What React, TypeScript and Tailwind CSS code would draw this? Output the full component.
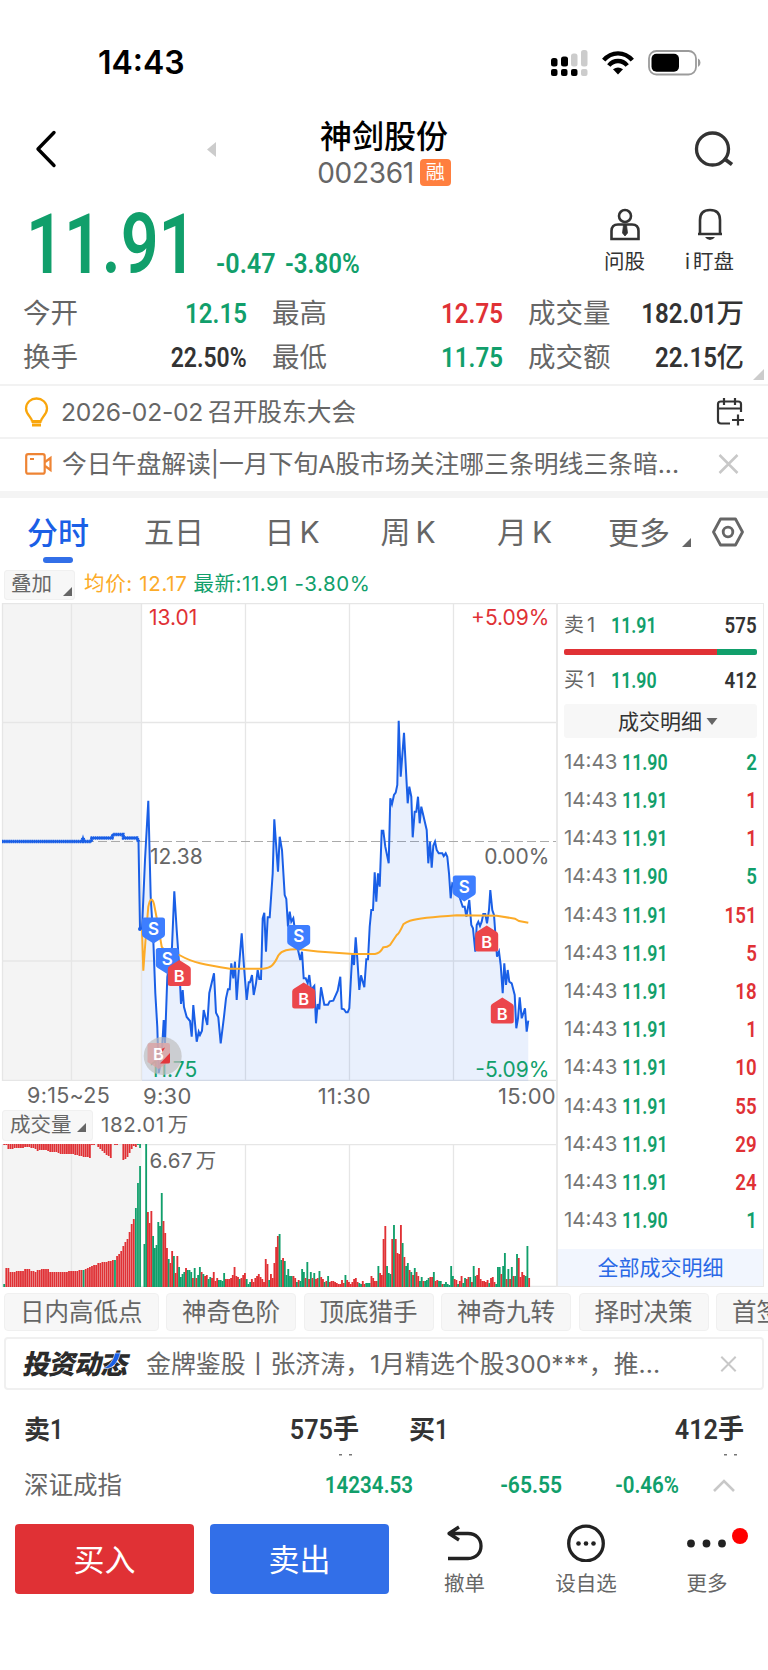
import React from "react";
import clsx from "clsx";

const GREEN = "#119f6b";
const RED = "#e03135";
const BLUE = "#1a5fe6";

// ── Data ─────────────────────────────────────────────────────────────────────

const PRE_MARKET = "2,238.5 82,238.5 83,235 84,238.5 91,238.5 92,235 112,235 113,231.5 123,231.5 123.5,235 137,235 138.5,238.5 140,326";

const PRICE_LINE =
  "142,326 145,257 148.3,197.7 150.7,293.7 153.3,337 155.3,390 157.3,424 158.7,470 161.5,455 163.7,417 165,440 167.3,374 172,344 174.3,288.3 176.7,327 179.3,364 181,401 182.7,387 184,404 186.7,414 190,418 191.7,433.7 193.3,402 196.7,438.7 198.7,428.7 200,432 202,427.7 203.7,407 207.3,422 209.3,390 214,370.3 216,409.7 218.3,414.3 220.7,440.3 224,413.7 226,395.3 228,386.3 229.7,386.3 231.3,360.3 233.3,375.3 235,358.7 236.7,397 239,363.7 241.7,330.3 244,363.7 246.7,397 248.7,379.3 250,379.3 252,372 253.7,392 256,380.3 257.7,367 259.3,376 261,376 262.7,315.3 264.3,309.7 266,348.7 267.7,314.3 269.7,314.3 272.7,270.3 274.3,216.3 278,268.7 279.7,233.7 282,247 284.7,292 286.3,296 288,323.7 289.7,308.7 291.3,318.7 293.3,315.3 297.3,343.7 300.3,357 302,348.7 303.7,375.3 305.7,375.3 307.7,380.3 309.3,372 311,387 314.3,383 316,420.3 317.7,401 319.3,406.3 321,384.3 324.3,401.7 328,401.7 329.7,398.3 333.3,397.7 337.7,387.7 340.3,373.7 341.7,405.7 344,406.3 346,409.3 347.7,409.3 349.3,405.3 352.3,350.3 354,362 355.7,334.3 357.3,355.3 359.3,387 361,372.3 364.3,384.3 366.3,356.3 368,356.3 369.7,323.7 371.3,307 373,307 374.7,269.3 376.3,298.7 378,270.3 379.7,283.7 381.7,227.7 383.3,227.7 385.3,243.7 388.7,260.3 390.3,195.3 392,201 394,192 395.7,189.7 397.3,182 398.7,117.7 400.7,173.7 404,129.7 407.7,200.3 409.3,183.7 411.3,193.7 412.7,234.3 414.7,208.7 416.3,208.7 418,193.7 419.7,220.3 421.3,203.7 426.7,227 428.3,260.3 430,238.7 431.7,264.7 433.3,242.7 435,238.7 436.7,247 438.7,250.3 442.3,250.3 443.7,253 445.7,250.3 447.3,253.7 449,270.3 450.7,295.3 452.3,280.3 456,283 462.7,303.7 464.7,303.7 466.3,313.7 469.3,297 471.3,322 473,325.3 475.3,348.7 476.7,322 478.3,318.7 480,323 481.7,318.7 483.3,311 485.3,311 487,320.3 489,307 490.3,287 492.3,307 494,312 497,353.7 499,348.7 500.7,362 502.7,390.3 504.3,360.3 506,382 507.7,367 509.3,378.7 511.7,380.3 514.7,392 516.3,425.3 518,415.3 519.7,394.3 521.7,415.3 525,405.3 526.7,428.7 528.3,417.7";

const AVERAGE_LINE =
  "M142 327L143.3 367.7L145.3 340L148.3 303.7Q151 291 154 301L156.7 315L161.7 343.7Q166 352 179.3 352Q190 358 200 360.3T230 365.7H263.3Q269 365 271.7 362.7Q275 360 278.3 352.5Q281 348.5 286 347.2T300 346.3Q310 348 325 349T353.3 351H375Q380 350.5 383.3 344.3Q387 344.5 390 342L396.7 332Q399 331 403.3 321.3Q406 319 410 317.7Q420 314.8 456.7 312.3L496.7 312.7L515 315.7L519 318L528.3 319.7";

// Heights in px, negative values are falling (green) bars
const AUCTION_VOLUME = [
  -3, 19, 19, 15, 15, 15, 16, 16, 16, 16, 18, 18, 18, 16, 16, 15, 17, 17, 18, 18, 18, 18, 15, 15, 15, 15, 15, 15, 15, 15,
  15, 16, 16, 16, 16, 16, 17, 17, -17, 18, 19, 20, 21, 22, 22, 24, 24, 25, 25, 25, 26, 26, 27, -27, 31, 33, 36, 41, 45,
  48, 55, 63, 68, -79, -104, -121,
];

const AUCTION_UNMATCHED = [
  1, 1, 5, 5, 5, 4, 4, 4, 4, 4, 3, 3, 3, 4, 4, 5, 7, 6, 6, 6, 6, 7, 8, 8, 8, 8, 9, 10, 10, 10, 10, 10, 10, 10, 11, 11, 12,
  12, 13, 13, 13, 14, 1, 1, 0, 3, 5, 7, 9, 11, 12, 14, 0, 1, 1, 0, 0, 16, 15, 13, 9, 5, 2, 3, -1, -4,
];

const MINUTE_VOLUME = [
  -43, -143, 75, 64, 76, -51, -39, -42, -65, -61, -94, 66, 54, 39, -28, 24, 36, -31, 14, 31, -20, -10, -13, -15, 19, -17,
  -17, -15, 9, -19, 9, -12, -20, 15, -13, 11, 12, -8, -10, 9, 15, 6, 9, -7, -7, -6, -14, 8, 8, 8, 9, 12, 20, 11, 10, -8, 9,
  12, 14, -8, -3, -5, 8, 5, 9, 11, 13, 10, 8, 5, 28, 23, -7, 13, 9, 24, 40, 51, -53, -27, 29, -26, -12, -18, -11, -11, 11,
  9, -5, 7, -6, -18, -15, 9, -25, 8, -15, 9, -14, 8, 9, -16, 10, 8, -5, 6, -11, 5, 6, 6, 5, 4, 3, 3, 7, 4, -12, 7, 5, 3, 5,
  8, 9, 5, -4, -3, 6, 3, -4, -4, -4, 11, 9, 6, 6, -21, 14, 12, 48, 61, -21, -14, -13, 48, -62, 48, 34, 33, 62, -44, 30, -21,
  -24, 17, -15, 12, -19, 15, 11, -6, -10, 6, -6, -7, -9, 10, 10, -15, 6, 7, -6, -6, 3, -3, -5, -3, -2, -21, -11, 8, 7, -3,
  6, 11, -4, -9, 8, 10, -10, 5, -21, -11, 12, 19, 8, 6, 6, 5, 7, -4, 9, 10, 5, -3, -20, -20, 13, -21, -34, 8, -18, 8, -20,
  11, -11, -33, 29, 10, 15, 12, -11, -41, 9,
];

const TRADES: [string, number, boolean][] = [
  ["11.90", 2, false],
  ["11.91", 1, true],
  ["11.91", 1, true],
  ["11.90", 5, false],
  ["11.91", 151, true],
  ["11.91", 5, true],
  ["11.91", 18, true],
  ["11.91", 1, true],
  ["11.91", 10, true],
  ["11.91", 55, true],
  ["11.91", 29, true],
  ["11.91", 24, true],
  ["11.90", 1, false],
];

// ── Small pieces ─────────────────────────────────────────────────────────────

// Condensed figures used for every price and quantity
const Din = ({
  children,
  className,
  scale = "scale-x-[0.86]",
}: {
  children: React.ReactNode;
  className?: string;
  scale?: string;
}) => (
  <span className={clsx("inline-block font-['Roboto'] font-semibold whitespace-nowrap", scale, className)}>
    {children}
  </span>
);

const Corner = ({ className }: { className?: string }) => (
  <svg viewBox="0 0 10 10" className={className} fill="currentColor">
    <path d="M10 0V10H0Z" />
  </svg>
);

const Close = ({ className }: { className?: string }) => (
  <svg viewBox="0 0 20 20" className={className} fill="none" stroke="#c8c8c8" strokeWidth="2.500">
    <path d="M1 1L19 19M19 1L1 19" />
  </svg>
);

const SellMark = ({ x, y }: { x: number; y: number }) => (
  <g transform={`translate(${x} ${y})`}>
    <path d="M-9 0H9Q11.500 0 11.500 2.500V17Q11.500 19 9.500 20L0 26L-9.500 20Q-11.500 19 -11.500 17V2.500Q-11.500 0 -9 0Z" fill="#3d7eff" />
    <text y="17" textAnchor="middle" fontSize="17" fontWeight="600" fill="#fff">S</text>
  </g>
);

const BuyMark = ({ x, y }: { x: number; y: number }) => (
  <g transform={`translate(${x} ${y})`}>
    <path d="M0 0L9.500 6Q11.500 7 11.500 9V23.500Q11.500 26 9 26H-9Q-11.500 26 -11.500 23.500V9Q-11.500 7 -9.500 6Z" fill="#eb464b" />
    <text y="22" textAnchor="middle" fontSize="16.500" fontWeight="600" fill="#fff">B</text>
  </g>
);

// ── Top area ─────────────────────────────────────────────────────────────────

const StatusBar = () => (
  <div className="flex h-[100px] shrink-0 items-center pt-[25px] pr-[67px] pl-[98px]">
    <span className="text-[32px] leading-none font-semibold text-black">14:43</span>
    <div className="ml-auto flex items-center">
      <svg width="38" height="26" viewBox="0 0 38 26" className="mr-[13px]">
        <g fill="#000">
          <rect x="0" y="8" width="6.500" height="8.500" rx="2.500" />
          <rect x="10" y="6.500" width="7" height="10" rx="2.500" />
          <rect x="0" y="19" width="6.500" height="7" rx="2" />
          <rect x="10" y="19" width="6.500" height="7" rx="2" />
          <rect x="20" y="19" width="6.500" height="7" rx="2" />
        </g>
        <g fill="#ccc">
          <rect x="20" y="3.500" width="6.500" height="13" rx="2.500" />
          <rect x="30" y="0" width="6.500" height="16.500" rx="2.500" />
          <rect x="30" y="19" width="6.500" height="7" rx="2" />
        </g>
      </svg>
      <svg width="32" height="24" viewBox="0 0 32 24" className="mr-[14px]">
        <g fill="none" stroke="#000" strokeWidth="4.300">
          <path d="M1.700 9.200Q7.500 2.300 16 2.300T30.300 9.200" />
          <path d="M6.800 14.500Q10.500 10 16 10T25.200 14.500" />
        </g>
        <path d="M16 23.500L11 18.300Q16 14.500 21 18.300Z" fill="#000" />
      </svg>
      <svg width="53" height="26" viewBox="0 0 53 26">
        <rect x="1" y="1" width="47" height="23.500" rx="7.500" fill="none" stroke="#9b9b9b" strokeWidth="1.800" />
        <rect x="3.500" y="3.800" width="27.500" height="18" rx="5" fill="#000" />
        <path d="M50 8.500Q52.500 9.500 52.500 12.700T50 17Z" fill="#9b9b9b" />
      </svg>
    </div>
  </div>
);

const Header = () => (
  <div className="grid h-[98px] shrink-0 grid-cols-[284px_200px_284px] items-center">
    <div className="flex items-center pl-[35px]">
      <svg width="22" height="38" viewBox="0 0 22 38" fill="none" stroke="#000" strokeWidth="3.400" strokeLinejoin="round" strokeLinecap="round">
        <path d="M19 2.500L3 19L19 35.500" />
      </svg>
      <svg width="9" height="15" viewBox="0 0 9 15" className="ml-[150px]" fill="#ccc">
        <path d="M9 0V15L0 7.500Z" />
      </svg>
    </div>
    <div className="flex flex-col items-center pt-[10px]">
      <h1 className="text-[32px] leading-[37px] font-medium text-black">神剑股份</h1>
      <div className="flex h-[36px] items-center gap-[6px]">
        <span className="text-[28px] leading-none tracking-[-0.3px] text-[#666]">002361</span>
        <span className="flex h-[27px] w-[31px] items-center justify-center rounded-[4px] bg-[#ff7f3f] text-[19px] leading-none text-white">
          融
        </span>
      </div>
    </div>
    <svg width="40" height="36" viewBox="0 0 40 36" className="mr-[34px] justify-self-end" fill="none" stroke="#333" strokeWidth="3.300">
      <circle cx="18.500" cy="18" r="16" />
      <path d="M30 27.500L38 33.500" strokeWidth="3.800" />
    </svg>
  </div>
);

const Quote = () => (
  <div className="flex h-[93px] shrink-0 pl-[26px] text-[#119f6b]">
    <div className="h-full w-[190px] pt-[5px]">
      <Din scale="scale-x-[0.79]" className="origin-left text-[84px] leading-[84px]">11.91</Din>
    </div>
    <div className="flex gap-[1px] pt-[52px]">
      <Din scale="scale-x-[0.9]" className="w-[68px] origin-left text-[28px] leading-[28px]">-0.47</Din>
      <Din className="origin-left text-[28px] leading-[28px]">-3.80%</Din>
    </div>
    <div className="mt-[10px] mr-[34px] ml-auto flex gap-[40px] text-[20.500px] leading-none text-[#333]">
      <div className="flex flex-col items-center gap-[11px]">
        <svg width="30" height="33" viewBox="0 0 30 33" fill="none" stroke="#333" strokeWidth="2.600">
          <circle cx="15" cy="8" r="6" />
          <path d="M1.500 31V23Q1.500 16.500 8 16.500H22Q28.500 16.500 28.500 23V31Z" />
          <path d="M13.500 17H16.500L17.500 25L15 28L12.500 25Z" fill="#333" strokeWidth="0.800" />
        </svg>
        <span>问股</span>
      </div>
      <div className="flex flex-col items-center gap-[11px]">
        <svg width="30" height="33" viewBox="0 0 30 33" fill="none" stroke="#333" strokeWidth="2.600">
          <path d="M5 26V12Q5 2 15 2T25 12V26M3 26H27" />
          <path d="M10 29H20Q18 32 15 32T10 29Z" fill="#333" stroke="none" />
        </svg>
        <span><span className="mr-[3px]">i</span>盯盘</span>
      </div>
    </div>
  </div>
);

const Stat = ({ label, value, unit, color = "text-[#333]" }: { label: string; value: string; unit?: string; color?: string }) => (
  <div className="flex h-[44px] items-center justify-between leading-none">
    <span className="text-[27.500px] text-[#666]">{label}</span>
    <span className={clsx("flex items-center text-[28px]", color)}>
      <Din className="origin-right" scale={value.endsWith("%") ? "scale-x-[0.82]" : "scale-x-[0.86]"}>
        {value}
      </Din>
      {unit && <span className="text-[27.500px] font-medium">{unit}</span>}
    </span>
  </div>
);

const Stats = () => (
  <div className="flex h-[93px] shrink-0 items-start">
    <div className="grid w-full grid-cols-[224px_231px_216px] gap-x-[25px] pt-[1px] pl-[23px]">
      <Stat label="今开" value="12.15" color="text-[#119f6b]" />
      <Stat label="最高" value="12.75" color="text-[#e03135]" />
      <Stat label="成交量" value="182.01" unit="万" />
      <Stat label="换手" value="22.50%" />
      <Stat label="最低" value="11.75" color="text-[#119f6b]" />
      <Stat label="成交额" value="22.15" unit="亿" />
    </div>
    <Corner className="mt-[78px] mr-[4px] h-[11px] w-[11px] shrink-0 text-[#ccc]" />
  </div>
);

const Notices = () => (
  <div className="shrink-0 text-[#666]">
    <div className="flex h-[53px] items-center border-t-2 border-[#f2f2f2] pr-[24px] pl-[24px]">
      <svg width="26" height="30" viewBox="0 0 26 30" fill="none" stroke="#f9a60c" strokeWidth="2.300">
        <path d="M8 24.500C8 20 2 18 2 11.500C2 5.500 7 1.500 12.500 1.500S23 5.500 23 11.500C23 18 17 20 17 24.500" />
        <path d="M7.500 24.500H17.500M8 28H17" strokeWidth="2.800" />
      </svg>
      <span className="ml-[11px] pt-px text-[24.700px] leading-none">
        <span className="mr-[5px] tracking-[-0.300px]">2026-02-02</span>召开股东大会
      </span>
      <svg width="28" height="28" viewBox="0 0 28 28" className="ml-auto" fill="none" stroke="#333" strokeWidth="2.200">
        <path d="M14 25.500H5Q2 25.500 2 22.500V6Q2 3.500 5 3.500H22Q25 3.500 25 6V14M2 10.500H25M8 0V7M19 0V7" />
        <path d="M16 22H28M22 16.500V27.500" />
      </svg>
    </div>
    <div className="flex h-[54px] items-center border-t-2 border-[#f2f2f2] pr-[29px] pb-[2px] pl-[25px]">
      <svg width="28" height="22" viewBox="0 0 28 22" fill="none" stroke="#ee8434" strokeWidth="2.200">
        <rect x="1.200" y="1.200" width="18.500" height="19.500" rx="2" />
        <path d="M5 6H9M20 9L25.500 5V17L20 13" />
      </svg>
      <span className="ml-[9px] w-[620px] text-[24.800px] leading-none whitespace-nowrap">
        今日午盘解读|一月下旬A股市场关注哪三条明线三条暗...
      </span>
      <Close className="ml-auto h-[20px] w-[21px]" />
    </div>
    <div className="h-[7px] bg-[#f4f4f4]" />
  </div>
);

const Tabs = () => (
  <div className="flex h-[68px] shrink-0 items-center text-[30px] leading-none text-[#666]">
    <div className="relative flex w-[116px] justify-center text-[31px] font-medium text-[#1a5fe6]">
      分时
      <span className="absolute -bottom-[15px] left-[43px] h-[6px] w-[30px] rounded-full bg-[#326fe8]" />
    </div>
    <div className="w-[116px] text-center">五日</div>
    <div className="w-[120px] text-center">日<span className="ml-[5px]">K</span></div>
    <div className="w-[112px] text-center">周<span className="ml-[5px]">K</span></div>
    <div className="w-[121px] text-center">月<span className="ml-[5px]">K</span></div>
    <div className="ml-[23px] w-[62px] text-[31px]">更多</div>
    <Corner className="mt-[21px] ml-[12px] h-[9px] w-[9px]" />
    <svg width="32" height="30" viewBox="0 0 32 30" className="ml-[21px]" fill="none" stroke="#666" strokeWidth="2.800" strokeLinejoin="round">
      <path d="M8.500 2H23.500L30.500 15L23.500 28H8.500L1.500 15Z" />
      <circle cx="16" cy="15" r="4.800" />
    </svg>
  </div>
);

// ── Charts ───────────────────────────────────────────────────────────────────

const Legend = () => (
  <div className="flex h-[37px] shrink-0 items-center pl-[4px] text-[20.500px] leading-none">
    <div className="flex h-[30px] w-[71px] items-center rounded-[3px] border border-[#f0f0f0] bg-[#f7f7f7] pl-[6px] text-[#666]">
      叠加
      <Corner className="mt-[13px] ml-[11px] h-[9px] w-[9px]" />
    </div>
    <span className="ml-[9px] tracking-[0.650px] text-[#fcab28]">均价: 12.17</span>
    <span className="ml-[6px] tracking-[0.550px] text-[#119f6b]">最新:11.91 -3.80%</span>
  </div>
);

const PriceChart = () => (
  <svg width="556" height="478" viewBox="0 0 556 478" className="block font-['Inter','Noto_Sans_CJK_SC',sans-serif]">
    <rect x="2" y="0" width="139.500" height="478" fill="#f4f4f4" />
    <path d="M2 0.500H557M2 119.500H557M2 358H557M2 477.500H557M2.500 0V478M71.500 0V478M141.500 0V478M245.500 0V478M349.500 0V478M453.500 0V478" stroke="#e6e6e6" strokeWidth="1.300" fill="none" />
    <path d="M85 238.500H557" stroke="#aaa" strokeWidth="1.200" strokeDasharray="9 4" />
    <polygon points={`142,478 ${PRICE_LINE} 528.3,478`} fill="#2b6cf0" fillOpacity="0.1" />
    <g fontSize="21">
      <text x="149" y="21.500" fill={RED}>13.01</text>
      <text x="549.500" y="21.500" textAnchor="end" fill={RED}>+5.09%</text>
      <text x="150" y="261" fill="#666">12.38</text>
      <text x="549.500" y="261" textAnchor="end" fill="#666">0.00%</text>
      <text x="150" y="474" fill={GREEN}>11.75</text>
      <text x="549.500" y="474" textAnchor="end" fill={GREEN}>-5.09%</text>
    </g>
    <polyline points={PRE_MARKET} fill="none" stroke={BLUE} strokeWidth="2" />
    <polyline points={PRE_MARKET.replace(" 140,326", "")} fill="none" stroke={BLUE} strokeWidth="3.600" strokeDasharray="1.6 0.5" />
    <circle cx="140" cy="326" r="2" fill={BLUE} />
    <polyline points={PRICE_LINE} fill="none" stroke={BLUE} strokeWidth="2" />
    <path d={AVERAGE_LINE} fill="none" stroke="#fcab28" strokeWidth="2" />
    <SellMark x={153.5} y={314.5} />
    <SellMark x={167.3} y={345} />
    <BuyMark x={179.3} y={357} />
    <SellMark x={298.7} y={322} />
    <BuyMark x={303.7} y={379.5} />
    <SellMark x={464.3} y={272.5} />
    <BuyMark x={486.7} y={322.5} />
    <BuyMark x={502.3} y={394.5} />
    {/* Touch indicator over the last buy mark */}
    <circle cx="162.700" cy="453" r="19" fill="#bdbdbd" fillOpacity="0.7" />
    <path d="M149.500 440H168Q170 440 170 442V458L158.700 466L147.500 459V442Q147.500 440 149.500 440Z" fill="#d9a3a4" fillOpacity="0.8" />
    <text x="158.500" y="457" textAnchor="middle" fontSize="16.500" fontWeight="600" fill="#fff">B</text>
    <path d="M170 450V459Q170 460.500 168 460.500H160Z" fill="#e2373c" />
    <path d="M161.500 446L165 444.500L162.500 449Z" fill="#e2373c" />
  </svg>
);

const VolumeChart = () => (
  <svg width="556" height="143" viewBox="0 0 556 143" className="block font-['Inter','Noto_Sans_CJK_SC',sans-serif]">
    <rect x="2" y="0" width="139.500" height="143" fill="#f4f4f4" />
    <path d="M2 0.500H557M2 142.500H557M2.500 0V143M71.500 0V143M245.500 0V143M349.500 0V143M453.500 0V143" stroke="#e6e6e6" strokeWidth="1.300" fill="none" />
    {AUCTION_VOLUME.map((v, i) => (
      <rect key={i} x={3.3 + i * 2.09} y={143 - Math.abs(v)} width="1.800" height={Math.abs(v)} fill={v < 0 ? GREEN : RED} />
    ))}
    {AUCTION_UNMATCHED.map((v, i) => (
      <rect key={i} x={3.3 + i * 2.09} y="0" width="1.800" height={Math.abs(v)} fill={v < 0 ? GREEN : RED} />
    ))}
    {MINUTE_VOLUME.map((v, i) => (
      <rect key={i} x={143.5 + i * 1.733} y={143 - Math.abs(v)} width="1.850" height={Math.abs(v)} fill={v < 0 ? GREEN : RED} />
    ))}
    <text x="149.500" y="23.500" fontSize="20.500" letterSpacing="0.4" fill="#666">6.67<tspan dx="3">万</tspan></text>
  </svg>
);

const ChartColumn = () => (
  <div className="w-[556px] shrink-0 text-[#666]">
    <PriceChart />
    <div className="flex h-[30px] items-center text-[22px] leading-none tracking-[0.300px]">
      <span className="w-[116px] pl-[27px] text-[21.500px]">9:15~25</span>
      <span className="ml-[27px]">9:30</span>
      <span className="ml-[126px]">11:30</span>
      <span className="ml-auto">15:00</span>
    </div>
    <div className="mb-[5px] flex h-[28px] items-center pl-[2px] text-[20.500px] leading-none">
      <div className="flex h-[31px] w-[91px] items-center rounded-[3px] border border-[#f0f0f0] bg-[#f7f7f7] pl-[7px]">
        成交量
        <Corner className="mt-[5px] ml-[5px] h-[9px] w-[9px]" />
      </div>
      <span className="ml-[8px] tracking-[0.600px]">182.01<span className="ml-[3px]">万</span></span>
    </div>
    <VolumeChart />
  </div>
);

const OrderRow = ({ side, price, qty }: { side: string; price: string; qty: string }) => (
  <div className="flex h-[42px] items-center text-[22.500px] leading-none">
    <span className="w-[47px] text-[20px] text-[#666]">{side}<span className="ml-[3px]">1</span></span>
    <Din scale="scale-x-[0.79]" className="origin-left text-[#119f6b]">{price}</Din>
    <Din scale="scale-x-[0.83]" className="ml-auto origin-right text-[#333]">{qty}</Din>
  </div>
);

const TradePanel = () => (
  <div className="flex w-[208px] flex-col border border-l-2 border-[#e9e9e9]">
    <div className="flex flex-col pr-[6px] pl-[6px]">
      <OrderRow side="卖" price="11.91" qty="575" />
      <div className="mt-[3px] flex h-[6px] overflow-hidden rounded-[2px]">
        <div className="w-[153px] bg-[#e03135]" />
        <div className="flex-1 bg-[#119f6b]" />
      </div>
      <div className="mt-[4px]">
        <OrderRow side="买" price="11.90" qty="412" />
      </div>
      <div className="mt-[3px] flex h-[34px] items-center justify-center rounded-[3px] bg-[#f7f7f7] text-[21px] leading-none text-[#333]">
        <span className="ml-[15px]">成交明细</span>
        <svg width="12" height="7" viewBox="0 0 12 7" className="ml-[4px]" fill="#666">
          <path d="M0.500 0H11.500L6 7Z" />
        </svg>
      </div>
      <div className="mt-[5px]">
        {TRADES.map(([price, qty, up], i) => (
          <div key={i} className="flex h-[38.200px] items-center text-[22.500px] leading-none">
            <span className="w-[58px] text-[20.500px] text-[#777]">14:43</span>
            <Din scale="scale-x-[0.79]" className="origin-left text-[#119f6b]">{price}</Din>
            <Din scale="scale-x-[0.83]" className={clsx("ml-auto origin-right", up ? "text-[#e03135]" : "text-[#119f6b]")}>
              {qty}
            </Din>
          </div>
        ))}
      </div>
    </div>
    <div className="mt-auto flex h-[37px] items-center justify-center bg-[#f2f6fe] text-[21px] leading-none text-[#2a69e6]">
      全部成交明细
    </div>
  </div>
);

// ── Bottom area ──────────────────────────────────────────────────────────────

const Chips = () => (
  <div className="mt-[6px] flex h-[38px] shrink-0 gap-[7.500px] overflow-hidden pl-[4px] text-[24.500px] leading-none text-[#666]">
    {["日内高低点", "神奇色阶", "顶底猎手", "神奇九转", "择时决策", "首签"].map((name) => (
      <div key={name} className="flex h-full shrink-0 items-center rounded-[4px] border border-[#f0f0f0] bg-[#f7f7f7] px-[15px]">
        {name}
      </div>
    ))}
  </div>
);

const News = () => (
  <div className="mx-[4px] mt-[6px] flex h-[53px] shrink-0 items-center rounded-[4px] border-2 border-[#f0f0f0] pt-px pr-[25px] pl-[18px]">
    <div className="relative h-[27px] w-[106px]">
      <span className="block -skew-x-12 text-[27px] leading-none font-black tracking-[-1px] text-[#2b2b2b]">投资动态</span>
      <svg width="20" height="17" viewBox="0 0 20 17" className="absolute top-[1px] left-[78px]">
        <path d="M0 16.500Q10 14 13 1H18.500Q15 14.500 6 16.500Z" fill="#1a5fe6" stroke="#fff" strokeWidth="0.600" />
      </svg>
    </div>
    <span className="ml-[16px] text-[24.900px] leading-none whitespace-nowrap text-[#666]">
      金牌鉴股丨张济涛，1月精选个股300***，推...
    </span>
    <Close className="ml-auto h-[16px] w-[17px] shrink-0" />
  </div>
);

const Depth = ({ side, qty }: { side: string; qty: string }) => (
  <div className="flex items-center justify-between text-[26px] leading-none font-bold text-[#333]">
    <span className="flex">{side}<Din className="origin-left text-[27px]">1</Din></span>
    <div className="relative flex">
      <Din scale="scale-x-[0.9]" className="origin-right text-[28px]">{qty}</Din>手
      {/* Top edge of the clipped next row */}
      <svg width="14" height="2" className="absolute right-[6px] -bottom-[12px]" fill="#777">
        <rect x="0" y="0" width="3" height="1.500" />
        <rect x="10" y="0" width="3" height="1.500" />
      </svg>
    </div>
  </div>
);

const IndexBar = () => (
  <div className="flex h-[48px] shrink-0 items-center pr-[33px] pl-[24px] leading-none">
    <span className="text-[24.500px] text-[#666]">深证成指</span>
    <div className="ml-auto flex text-[24.500px] text-[#119f6b]">
      <Din scale="scale-x-[0.84]" className="w-[130px] origin-right text-right">14234.53</Din>
      <Din className="w-[149px] origin-right text-right">-65.55</Din>
      <Din scale="scale-x-[0.84]" className="w-[117px] origin-right text-right">-0.46%</Din>
    </div>
    <svg width="22" height="13" viewBox="0 0 22 13" className="ml-[34px]" fill="none" stroke="#c8c8c8" strokeWidth="2.600">
      <path d="M1 12L11 2L21 12" />
    </svg>
  </div>
);

const Action = ({ label, children, className }: { label: string; children: React.ReactNode; className: string }) => (
  <div className={clsx("flex flex-col items-center text-[20.500px] leading-none text-[#666]", className)}>
    <svg width="40" height="38" viewBox="0 0 40 38" className="mb-[12px]" fill="none" stroke="#222" strokeWidth="3.300">
      {children}
    </svg>
    {label}
  </div>
);

const Footer = () => (
  <div className="mt-[15px] flex shrink-0 pl-[15px]">
    <button className="h-[70px] w-[179px] rounded-[4px] bg-[#e03135] text-[31px] leading-none text-white">买入</button>
    <button className="ml-[16px] h-[70px] w-[179px] rounded-[4px] bg-[#326fe8] text-[31px] leading-none text-white">卖出</button>
    <Action label="撤单" className="ml-[45px] w-[61px]">
      <path d="M3 34.500H23C31 34.500 36 29 36 22S31 9.500 23 9.500H4M14 3L4 9.500L14 16" strokeLinejoin="round" />
    </Action>
    <Action label="设自选" className="ml-[56px] w-[70px]">
      <circle cx="20" cy="19.500" r="17.300" />
      <g fill="#222" stroke="none">
        <circle cx="12.500" cy="19.500" r="2.300" />
        <circle cx="20" cy="19.500" r="2.300" />
        <circle cx="27.500" cy="19.500" r="2.300" />
      </g>
    </Action>
    <div className="relative ml-[51px]">
      <Action label="更多" className="w-[70px]">
        <g fill="#222" stroke="none">
          <circle cx="4" cy="19.500" r="3.900" />
          <circle cx="19.500" cy="19.500" r="3.900" />
          <circle cx="35" cy="19.500" r="3.900" />
        </g>
      </Action>
      <span className="absolute top-[4px] left-[60px] h-[16px] w-[16px] rounded-full bg-[#ff0000]" />
    </div>
  </div>
);

export default function App() {
  return (
    <div className="flex h-[1670px] w-[768px] flex-col overflow-hidden bg-white font-['Inter','Noto_Sans_CJK_SC',sans-serif]">
      <StatusBar />
      <Header />
      <Quote />
      <Stats />
      <Notices />
      <Tabs />
      <Legend />
      <div className="flex h-[684px] shrink-0">
        <ChartColumn />
        <TradePanel />
      </div>
      <Chips />
      <News />
      <div className="grid h-[71px] shrink-0 grid-cols-2 items-center gap-x-[50px] pt-[9px] pr-[24px] pl-[24px]">
        <Depth side="卖" qty="575" />
        <Depth side="买" qty="412" />
      </div>
      <IndexBar />
      <Footer />
    </div>
  );
}
